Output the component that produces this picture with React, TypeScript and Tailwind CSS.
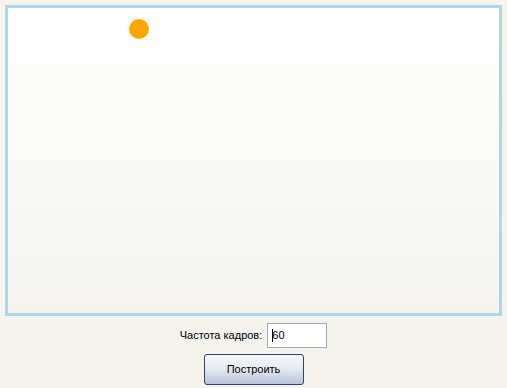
export default function App() {
  return (
    <div
      className="w-[507px] h-[388px] bg-[#f4f3ee] flex flex-col items-center pt-[5px] px-[5px] text-[11px] text-black"
      style={{ fontFamily: '"Liberation Sans", Tahoma, sans-serif' }}
    >
      {/* drawing area */}
      <div className="w-[497px] h-[311px] shrink-0 border-[3px] border-[#add8e6] bg-gradient-to-b from-white to-[#f5f4ef]">
        <div className="ml-[121px] mt-[11px] w-[20px] h-[20px] rounded-full bg-[#ffa500]" />
      </div>

      <div className="mt-[7px] flex items-center gap-[5px]">
        <span>Частота кадров:</span>
        <div className="w-[60px] h-[25px] border border-[#a5acb5] bg-white flex items-center pl-[4px]">
          <span className="w-px h-[13px] bg-black" />
          <span className="-ml-px">60</span>
        </div>
      </div>

      <button className="mt-[6px] w-[100px] h-[31px] rounded-[3px] border border-[#2f4470] bg-gradient-to-b from-[#f8f9fb] via-[#e4e8f0] to-[#b7c3d8] text-[11px]">
        Построить
      </button>
    </div>
  );
}
